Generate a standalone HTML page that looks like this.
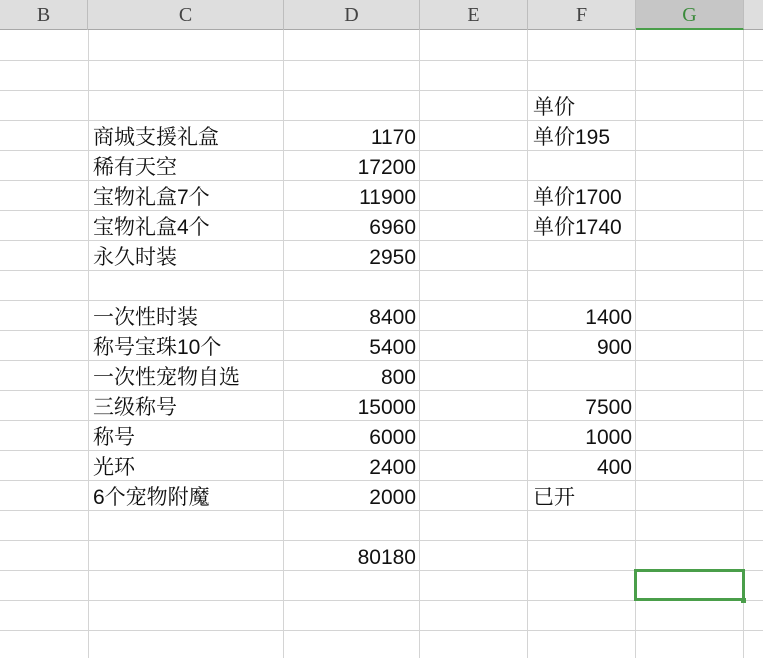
<!DOCTYPE html>
<html><head><meta charset="utf-8"><style>
*{margin:0;padding:0;box-sizing:border-box}
body{width:763px;height:658px;overflow:hidden;background:#fff;position:relative;font-family:"Liberation Sans","Noto Serif CJK SC",serif}
.hdr{position:absolute;top:0;left:0;width:763px;height:30px;background:#dedede;border-bottom:1px solid #a8a8a8}
.h{position:absolute;top:0;height:30px;line-height:31px;text-align:center;font-family:"Liberation Serif",serif;font-size:20px;color:#444;border-right:1px solid #bdbdbd}
.vl{position:absolute;top:30px;bottom:0;width:1px;background:#d4d4d4}
.hl{position:absolute;left:0;width:763px;height:1px;background:#d4d4d4}
.t{position:absolute;font-size:21px;color:#111;line-height:30px;height:30px;white-space:nowrap;font-family:"Liberation Sans","Noto Serif CJK SC",serif}
.r{text-align:right}
</style></head><body>
<div class="hdr"></div>
<div class="h" style="left:0;width:88px">B</div>
<div class="h" style="left:88px;width:196px">C</div>
<div class="h" style="left:284px;width:136px">D</div>
<div class="h" style="left:420px;width:108px">E</div>
<div class="h" style="left:528px;width:108px">F</div>
<div class="h" style="left:636px;width:108px;background:#c6c6c6;color:#3a8a3a;border-bottom:2px solid #4a9e4a">G</div>
<div class="vl" style="left:88px"></div>
<div class="vl" style="left:283px"></div>
<div class="vl" style="left:419px"></div>
<div class="vl" style="left:527px"></div>
<div class="vl" style="left:635px"></div>
<div class="vl" style="left:743px"></div>
<div class="hl" style="top:60px"></div><div class="hl" style="top:90px"></div><div class="hl" style="top:120px"></div><div class="hl" style="top:150px"></div><div class="hl" style="top:180px"></div><div class="hl" style="top:210px"></div><div class="hl" style="top:240px"></div><div class="hl" style="top:270px"></div><div class="hl" style="top:300px"></div><div class="hl" style="top:330px"></div><div class="hl" style="top:360px"></div><div class="hl" style="top:390px"></div><div class="hl" style="top:420px"></div><div class="hl" style="top:450px"></div><div class="hl" style="top:480px"></div><div class="hl" style="top:510px"></div><div class="hl" style="top:540px"></div><div class="hl" style="top:570px"></div><div class="hl" style="top:600px"></div><div class="hl" style="top:630px"></div>

<div class="t" style="left:533px;top:93px">单价</div>
<div class="t" style="left:93px;top:123px">商城支援礼盒</div><div class="t r" style="left:284px;width:132px;top:123px">1170</div><div class="t" style="left:533px;top:123px">单价195</div>
<div class="t" style="left:93px;top:153px">稀有天空</div><div class="t r" style="left:284px;width:132px;top:153px">17200</div>
<div class="t" style="left:93px;top:183px">宝物礼盒7个</div><div class="t r" style="left:284px;width:132px;top:183px">11900</div><div class="t" style="left:533px;top:183px">单价1700</div>
<div class="t" style="left:93px;top:213px">宝物礼盒4个</div><div class="t r" style="left:284px;width:132px;top:213px">6960</div><div class="t" style="left:533px;top:213px">单价1740</div>
<div class="t" style="left:93px;top:243px">永久时装</div><div class="t r" style="left:284px;width:132px;top:243px">2950</div>
<div class="t" style="left:93px;top:303px">一次性时装</div><div class="t r" style="left:284px;width:132px;top:303px">8400</div><div class="t r" style="left:528px;width:104px;top:303px">1400</div>
<div class="t" style="left:93px;top:333px">称号宝珠10个</div><div class="t r" style="left:284px;width:132px;top:333px">5400</div><div class="t r" style="left:528px;width:104px;top:333px">900</div>
<div class="t" style="left:93px;top:363px">一次性宠物自选</div><div class="t r" style="left:284px;width:132px;top:363px">800</div>
<div class="t" style="left:93px;top:393px">三级称号</div><div class="t r" style="left:284px;width:132px;top:393px">15000</div><div class="t r" style="left:528px;width:104px;top:393px">7500</div>
<div class="t" style="left:93px;top:423px">称号</div><div class="t r" style="left:284px;width:132px;top:423px">6000</div><div class="t r" style="left:528px;width:104px;top:423px">1000</div>
<div class="t" style="left:93px;top:453px">光环</div><div class="t r" style="left:284px;width:132px;top:453px">2400</div><div class="t r" style="left:528px;width:104px;top:453px">400</div>
<div class="t" style="left:93px;top:483px">6个宠物附魔</div><div class="t r" style="left:284px;width:132px;top:483px">2000</div><div class="t" style="left:533px;top:483px">已开</div>
<div class="t r" style="left:284px;width:132px;top:543px">80180</div>
<div style="position:absolute;left:634px;top:569px;width:111px;height:32px;border:3px solid #4a9e4a"></div>
<div style="position:absolute;left:741px;top:598px;width:5px;height:5px;background:#4a9e4a"></div>
</body></html>
